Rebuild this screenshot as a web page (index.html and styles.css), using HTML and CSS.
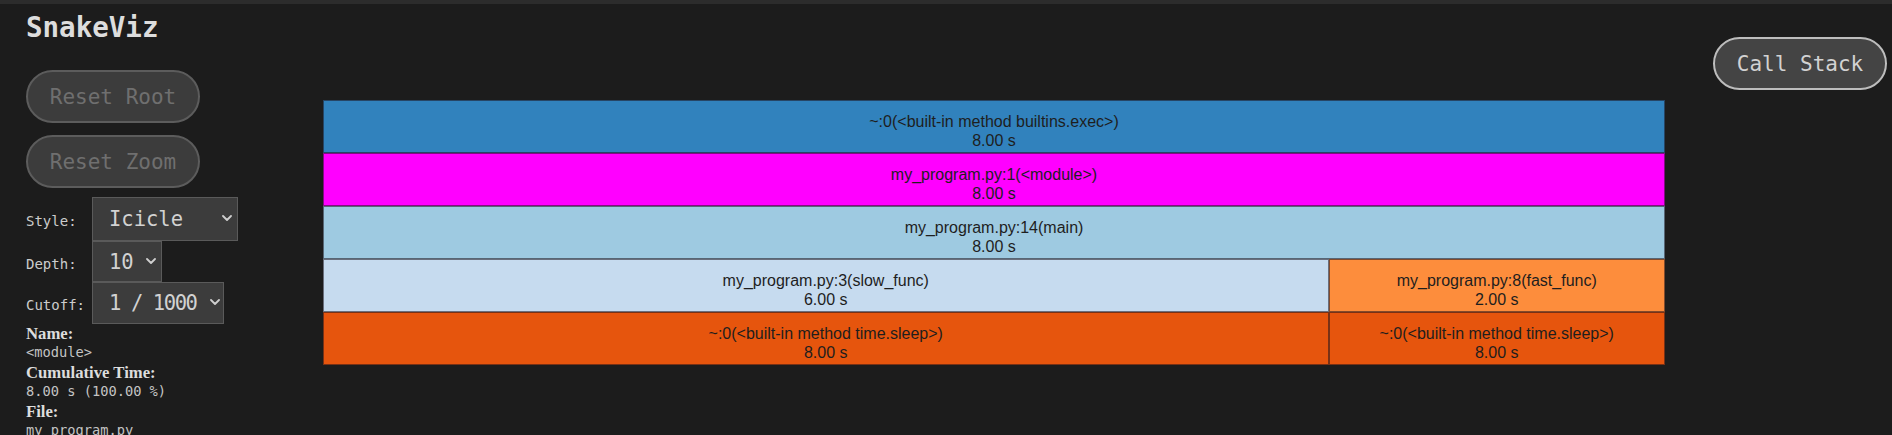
FILE: index.html
```html
<!DOCTYPE html>
<html>
<head>
<meta charset="utf-8">
<title>SnakeViz</title>
<link rel="stylesheet" href="styles.css">
</head>
<body>
<div class="topbar"></div>
<div class="page">
  <aside class="sidebar">
    <h1 class="title">SnakeViz</h1>
    <div class="btn disabled">Reset Root</div>
    <div class="btn disabled">Reset Zoom</div>
    <div class="controls">
      <div class="ctl-row r1">
        <span class="ctl-label">Style:</span>
        <div class="sel w-style"><span>Icicle</span><svg class="chev" width="10" height="6" viewBox="0 0 10 6"><polyline points="1,1 5,5 9,1" fill="none" stroke="#cfcfcf" stroke-width="1.8" stroke-linecap="round" stroke-linejoin="round"/></svg></div>
      </div>
      <div class="ctl-row r2">
        <span class="ctl-label">Depth:</span>
        <div class="sel w-depth"><span>10</span><svg class="chev" width="10" height="6" viewBox="0 0 10 6"><polyline points="1,1 5,5 9,1" fill="none" stroke="#cfcfcf" stroke-width="1.8" stroke-linecap="round" stroke-linejoin="round"/></svg></div>
      </div>
      <div class="ctl-row r3">
        <span class="ctl-label">Cutoff:</span>
        <div class="sel w-cutoff"><span class="tight">1 / 1000</span><svg class="chev" width="10" height="6" viewBox="0 0 10 6"><polyline points="1,1 5,5 9,1" fill="none" stroke="#cfcfcf" stroke-width="1.8" stroke-linecap="round" stroke-linejoin="round"/></svg></div>
      </div>
    </div>
    <div class="info">
      <div class="info-label">Name:</div>
      <div class="info-val">&lt;module&gt;</div>
      <div class="info-label">Cumulative Time:</div>
      <div class="info-val">8.00 s (100.00 %)</div>
      <div class="info-label">File:</div>
      <div class="info-val">my_program.py</div>
    </div>
  </aside>
  <main class="chart">
    <div class="row">
      <div class="cell c-blue" style="flex: 1">~:0(&lt;built-in method builtins.exec&gt;)<br>8.00 s</div>
    </div>
    <div class="row">
      <div class="cell c-magenta" style="flex: 1">my_program.py:1(&lt;module&gt;)<br>8.00 s</div>
    </div>
    <div class="row">
      <div class="cell c-lblue" style="flex: 1">my_program.py:14(main)<br>8.00 s</div>
    </div>
    <div class="row">
      <div class="cell c-llblue" style="flex: 6">my_program.py:3(slow_func)<br>6.00 s</div>
      <div class="cell c-orange" style="flex: 2">my_program.py:8(fast_func)<br>2.00 s</div>
    </div>
    <div class="row">
      <div class="cell c-dorange" style="flex: 6">~:0(&lt;built-in method time.sleep&gt;)<br>8.00 s</div>
      <div class="cell c-dorange" style="flex: 2">~:0(&lt;built-in method time.sleep&gt;)<br>8.00 s</div>
    </div>
  </main>
  <div class="spacer"></div>
  <div class="btn callstack">Call Stack</div>
</div>
</body>
</html>
```

FILE: styles.css
```css
html, body {
  margin: 0;
  padding: 0;
  background: #1c1c1c;
  height: 100%;
  overflow: hidden;
}

.topbar {
  height: 4px;
  background: #2c2c2c;
}

.page {
  display: flex;
  align-items: flex-start;
}

.sidebar {
  width: 297px;
  padding-left: 26px;
  flex: none;
  color: #cfcfcf;
}

.title {
  margin: 7px 0 0 0;
  font-family: "DejaVu Sans Mono", monospace;
  font-weight: bold;
  font-size: 27.5px;
  line-height: 32px;
  color: #dddddd;
}

.btn {
  box-sizing: border-box;
  width: 174px;
  height: 53px;
  border-radius: 27px;
  display: flex;
  align-items: center;
  justify-content: center;
  font-family: "DejaVu Sans Mono", monospace;
  font-size: 21px;
}

.btn.disabled {
  background: #3c3c3c;
  border: 2px solid #5c5c5c;
  color: #6f6f6f;
  margin-top: 12px;
}

.sidebar .title + .btn {
  margin-top: 27px;
}

.callstack {
  flex: none;
  margin-top: 33px;
  margin-right: 5px;
  background: #444444;
  border: 2px solid #bdbdbd;
  color: #d2d2d2;
}

.controls {
  margin-top: 9px;
  display: flex;
  flex-direction: column;
}

.ctl-row {
  display: flex;
  align-items: baseline;
}

.ctl-label {
  width: 66px;
  flex: none;
  font-family: "DejaVu Sans Mono", monospace;
  font-size: 14px;
  color: #cccccc;
}

.sel {
  box-sizing: border-box;
  display: flex;
  align-items: center;
  background: #3c3c3c;
  border: 1px solid #5a5a5a;
  color: #d2d2d2;
  font-family: "DejaVu Sans Mono", monospace;
  font-size: 20.5px;
  padding-left: 16px;
  padding-right: 5px;
}

.sel span {
  flex: 1;
  white-space: nowrap;
}

.sel .tight {
  letter-spacing: -1.4px;
}

.chev {
  flex: none;
  margin-top: -2px;
}

.r1 .sel { height: 44px; }
.r2 .sel { height: 41px; }
.r3 .sel { height: 42px; }

.w-style { width: 146px; }
.w-depth { width: 70px; }
.w-cutoff { width: 132px; padding-right: 3px; }

.info {
  line-height: 19.4px;
}

.info-label {
  font-family: "Liberation Serif", "Times New Roman", serif;
  font-weight: bold;
  font-size: 16.7px;
  color: #dddddd;
}

.info-val {
  font-family: "DejaVu Sans Mono", monospace;
  font-size: 13.7px;
  color: #c4c4c4;
}

.chart {
  flex: none;
  width: 1342px;
  margin-top: 96px;
  display: flex;
  flex-direction: column;
}

.row {
  display: flex;
  height: 53px;
}

.cell {
  box-sizing: border-box;
  border: 1px solid rgba(30, 20, 30, 0.55);
  text-align: center;
  font-family: "Liberation Sans", Arial, sans-serif;
  font-size: 16px;
  line-height: 19px;
  padding-top: 11px;
  color: #1e1e1e;
  overflow: hidden;
  white-space: nowrap;
}

.c-blue { background: #3182bd; }
.c-magenta { background: #ff00ff; }
.c-lblue { background: #9ecae1; }
.c-llblue { background: #c6dbef; }
.c-orange { background: #fd8d3c; }
.c-dorange { background: #e6550d; }

.spacer {
  flex: 1;
}
```
